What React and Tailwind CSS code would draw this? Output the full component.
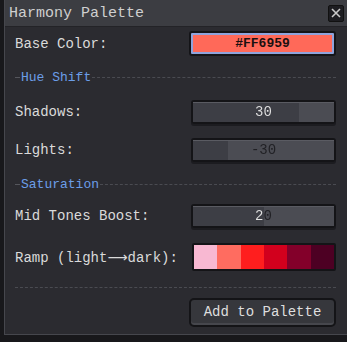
import React from 'react';

const FONT = { fontFamily: '"Liberation Mono", "DejaVu Sans Mono", monospace' };

const ramp = ['#f8b8d2', '#ff6c60', '#ff1e1e', '#d2001d', '#83002a', '#4d0023'];

function Slider({ value, min = -60, max = 60 }) {
    const pct = ((value - min) / (max - min)) * 100;
    // text colour flips where the fill ends
    const textStyle = {
        backgroundImage: `linear-gradient(to right, #e2e2e2 ${pct}%, #202024 ${pct}%)`,
        WebkitBackgroundClip: 'text',
        backgroundClip: 'text',
        color: 'transparent',
    };
    return (
        <div className="w-[145px] h-[24px] rounded-[3px] border-2 border-[#141417] shadow-[0_2px_0_#1c1c20]">
            <div className="relative w-full h-full bg-[#4b4c53] border-t border-[#5a5b62] overflow-hidden">
                <div className="absolute left-0 top-0 bottom-0 bg-[#3d3e45]" style={{ width: `${pct}%` }} />
                <div className="absolute inset-0 flex items-center justify-center text-[14px]" style={textStyle}>{value}</div>
            </div>
        </div>
    );
}

function Section({ title }) {
    return (
        <div className="flex items-center h-[14px]">
            <div className="w-[5px] border-t border-dashed border-[#55565c]" />
            <span className="px-[1px] text-[13px] leading-none text-[#6b9ee8]">{title}</span>
            <div className="flex-1 border-t border-dashed border-[#4a4b51]" />
        </div>
    );
}

function Row({ label, children, className = '' }) {
    return (
        <div className={`flex items-center justify-between ${className}`}>
            <span className="text-[14px] leading-none text-[#dadada]">{label}</span>
            {children}
        </div>
    );
}

export default function App() {
    return (
        <div className="w-[347px] h-[342px] bg-[#18181b] overflow-hidden" style={FONT}>
            <div className="ml-[4px] h-[335px] bg-[#2b2b30] border-l border-b border-[#46474d] flex flex-col">
                <div className="h-[27px] bg-[#3c3d42] border-b border-[#232327] flex items-center justify-between pl-[4px] pr-[3px]">
                    <span className="text-[15px] leading-none text-[#cfcfcf]">Harmony Palette</span>
                    <div className="w-[16px] h-[17px] rounded-[2px] bg-[#1d1d21] border border-[#111] flex items-center justify-center">
                        <svg width="10" height="10" viewBox="0 0 10 10">
                            <path d="M1 1 L9 9 M9 1 L1 9" stroke="#c9c9c9" strokeWidth="1.6" />
                        </svg>
                    </div>
                </div>

                <div className="pl-[10px] pr-[11px] flex flex-col">
                    <Row label="Base Color:" className="mt-[4px]">
                        <div className="w-[147px] h-[25px] rounded-[3px] border-2 border-[#141417] bg-[#8fa3dc] p-[2px]">
                            <div className="w-full h-full bg-[#ff6959] flex items-center justify-center text-[13px] font-bold text-[#1a1010]">#FF6959</div>
                        </div>
                    </Row>

                    <div className="mt-[14px]"><Section title="Hue Shift" /></div>

                    <Row label="Shadows:" className="mt-[16px]">
                        <Slider value={30} />
                    </Row>
                    <Row label="Lights:" className="mt-[14px]">
                        <Slider value={-30} />
                    </Row>

                    <div className="mt-[15px]"><Section title="Saturation" /></div>

                    <Row label="Mid Tones Boost:" className="mt-[13px]">
                        <Slider value={20} min={-40} max={80} />
                    </Row>

                    <Row
                        label={<>Ramp (light<span className="font-['DejaVu_Sans',sans-serif]">⟶</span>dark):</>}
                        className="mt-[15px]"
                    >
                        <div className="w-[144px] h-[28px] rounded-[2px] border-2 border-[#141417] flex overflow-hidden">
                            {ramp.map((c) => (
                                <div key={c} className="flex-1" style={{ background: c }} />
                            ))}
                        </div>
                    </Row>

                    <div className="mt-[16px] border-t border-dashed border-[#4a4b51]" />

                    <div className="mt-[10px] flex justify-end">
                        <div className="w-[147px] h-[29px] rounded-[5px] border-2 border-[#141417] bg-[#36373c] shadow-[inset_0_-2px_0_#46474d] flex items-center justify-center text-[14px] text-[#dedede]">
                            Add to Palette
                        </div>
                    </div>
                </div>
            </div>
        </div>
    );
}
